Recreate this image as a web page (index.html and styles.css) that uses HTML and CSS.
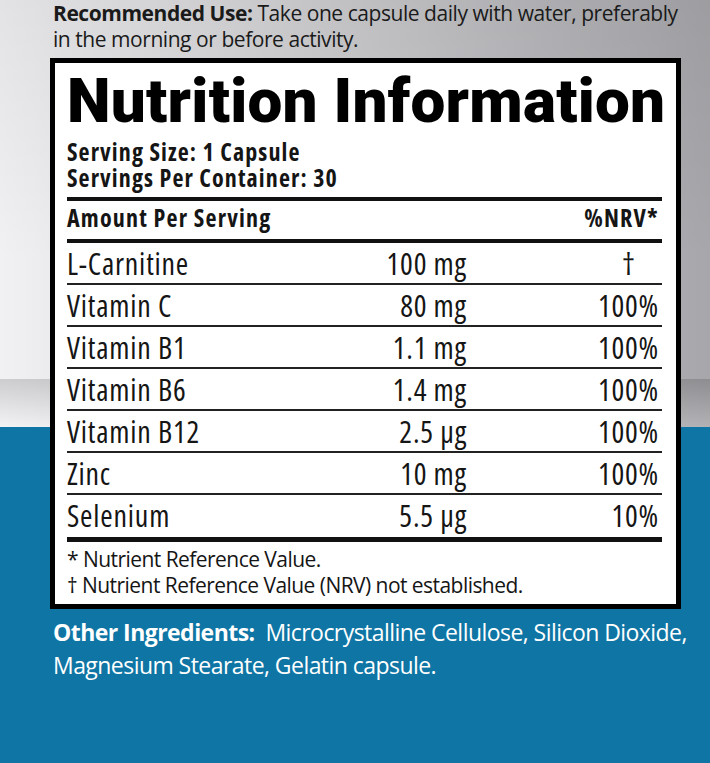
FILE: index.html
```html
<!DOCTYPE html>
<html>
<head>
<meta charset="utf-8">
<link rel="stylesheet" href="styles.css">
</head>
<body>
<div class="page">
  <p class="use"><b>Recommended Use:</b> Take one capsule daily with water, preferably in the morning or before activity.</p>
  <div class="label">
    <h1 class="title">Nutrition Information</h1>
    <div class="serving">
      <div>Serving Size: 1 Capsule</div>
      <div>Servings Per Container: 30</div>
    </div>
    <div class="head">
      <span>Amount Per Serving</span>
      <span>%NRV*</span>
    </div>
    <div class="rows">
      <div class="row"><span class="name">L-Carnitine</span><span class="amt">100 mg</span><span class="nrv dag">†</span></div>
      <div class="row"><span class="name">Vitamin C</span><span class="amt">80 mg</span><span class="nrv">100%</span></div>
      <div class="row"><span class="name">Vitamin B1</span><span class="amt">1.1 mg</span><span class="nrv">100%</span></div>
      <div class="row"><span class="name">Vitamin B6</span><span class="amt">1.4 mg</span><span class="nrv">100%</span></div>
      <div class="row"><span class="name">Vitamin B12</span><span class="amt">2.5 µg</span><span class="nrv">100%</span></div>
      <div class="row"><span class="name">Zinc</span><span class="amt">10 mg</span><span class="nrv">100%</span></div>
      <div class="row"><span class="name">Selenium</span><span class="amt">5.5 µg</span><span class="nrv">10%</span></div>
    </div>
    <div class="notes">
      <div>* Nutrient Reference Value.</div>
      <div>† Nutrient Reference Value (NRV) not established.</div>
    </div>
  </div>
  <p class="other"><b>Other Ingredients:</b>&nbsp; Microcrystalline Cellulose, Silicon Dioxide, Magnesium Stearate, Gelatin capsule.</p>
</div>
</body>
</html>
```
FILE: styles.css
```css
html, body {
  margin: 0;
  padding: 0;
}
body {
  width: 710px;
  height: 763px;
  overflow: hidden;
  font-family: "Open Sans", "Noto Sans", sans-serif;
  color: #151515;
  background-color: #0e75a4;
  background-image:
    linear-gradient(#0e75a4, #0e75a4),
    linear-gradient(to bottom, rgba(0,0,0,0.15), rgba(255,255,255,0.12)),
    linear-gradient(to bottom, rgba(0,0,0,0.06), rgba(0,0,0,0) 260px),
    linear-gradient(to right, #f1f1f3, #a7a7ab);
  background-repeat: no-repeat;
  background-size: 100% 336px, 100% 48px, 100% 379px, 100% 427px;
  background-position: 0 427px, 0 379px, 0 0, 0 0;
}
.page {
  padding: 0 0 0 50px;
}
.use {
  margin: 0 0 6px 3px;
  font-size: 21px;
  letter-spacing: -0.45px;
  line-height: 26px;
  color: #1a1a1a;
  width: 640px;
}
.use b { font-weight: bold; }
.label {
  border: 5px solid #000;
  background: #fff;
  padding: 6px 14px 6px 12px;
  box-sizing: border-box;
  width: 631px;
}
.title {
  margin: 0;
  font-family: "Roboto", "Open Sans", sans-serif;
  font-size: 62px;
  font-stretch: 90%;
  line-height: 64px;
  font-weight: 900;
  letter-spacing: 0.25px;
  white-space: nowrap;
  color: #000;
}
.serving {
  margin-top: 6px;
  font-size: 24px;
  font-stretch: 75%;
  letter-spacing: 1.1px;
  line-height: 26px;
  font-weight: bold;
  padding-bottom: 6px;
  border-bottom: 4px solid #111;
}
.head {
  display: flex;
  justify-content: space-between;
  font-size: 24px;
  font-stretch: 75%;
  letter-spacing: 1.2px;
  line-height: 26px;
  font-weight: bold;
  padding: 4px 3px 8px 0;
  border-bottom: 4px solid #111;
}
.row {
  display: grid;
  grid-template-columns: 300px 100px 1fr;
  font-size: 30px;
  font-stretch: 75%;
  letter-spacing: 0.8px;
  line-height: 40px;
  height: 39px;
  padding-top: 1px;
  border-bottom: 2px solid #222;
  white-space: nowrap;
}
.row:last-child {
  border-bottom: 0;
}
.amt { text-align: right; }
.nrv { text-align: right; padding-right: 3px; }
.dag { padding-right: 26px; }
.notes {
  border-top: 5px solid #111;
  margin-top: 2px;
  padding-top: 4px;
  font-size: 21px;
  letter-spacing: -0.55px;
  line-height: 26px;
}
.other {
  margin: 7px 0 0 3px;
  color: #fff;
  font-size: 23px;
  letter-spacing: -0.55px;
  line-height: 33px;
  width: 645px;
}
```
